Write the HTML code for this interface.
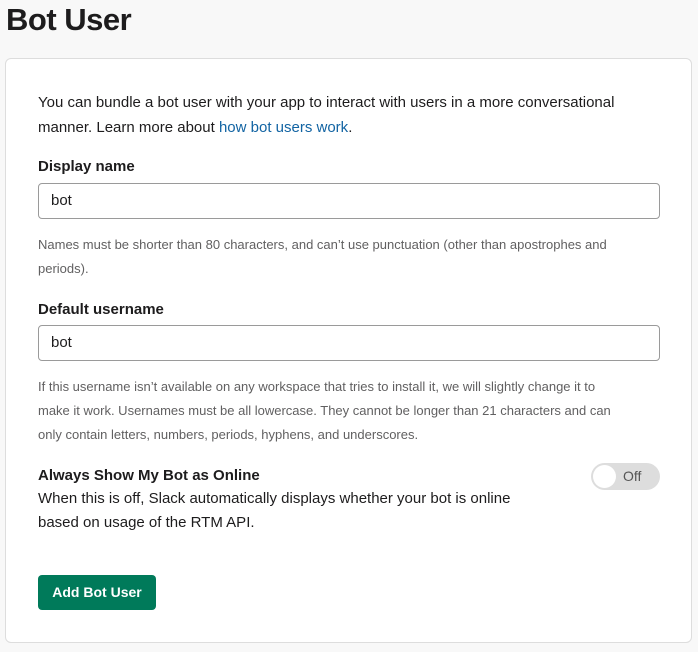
<!DOCTYPE html>
<html><head><style>
body{margin:0;width:698px;height:652px;background:#f8f8f8;font-family:"Liberation Sans",sans-serif;color:#1d1c1d;position:relative;overflow:hidden}
.a{position:absolute;white-space:nowrap}
h1{position:absolute;left:6px;top:2px;margin:0;font-size:31px;font-weight:bold;letter-spacing:-0.5px}
.card{position:absolute;left:5px;top:58px;width:687px;height:585px;background:#fff;border:1px solid #ddd;border-radius:6px;box-sizing:border-box}
.p{font-size:15px;line-height:25px}
.b{font-size:15px;font-weight:bold}
.in{position:absolute;left:38px;width:622px;height:36px;border:1px solid #9a9a9a;border-radius:4px;box-sizing:border-box;font-size:15px;padding:8px 12px}
.h{font-size:13px;color:#616061;line-height:24px}
a{color:#1264a3;text-decoration:none}
.tg{position:absolute;left:591px;top:463px;width:69px;height:27px;background:#ddd;border-radius:14px}
.tg .k{position:absolute;left:2px;top:2px;width:23px;height:23px;background:#fff;border-radius:50%}
.tg span{position:absolute;left:32px;top:5px;font-size:14px;color:#555}
.btn{position:absolute;left:38px;top:575px;width:118px;height:35px;background:#007a5a;border-radius:4px;color:#fff;font-size:14px;font-weight:bold;text-align:center;line-height:35px}
</style></head><body>
<h1>Bot User</h1>
<div class="card"></div>
<div class="a p" style="left:38px;top:90px">You can bundle a bot user with your app to interact with users in a more conversational<br>manner. Learn more about <a>how bot users work</a>.</div>
<div class="a b" style="left:38px;top:158px">Display name</div>
<div class="in" style="top:183px">bot</div>
<div class="a h" style="left:38px;top:233px">Names must be shorter than 80 characters, and can’t use punctuation (other than apostrophes and<br>periods).</div>
<div class="a b" style="left:38px;top:301px">Default username</div>
<div class="in" style="top:325px">bot</div>
<div class="a h" style="left:38px;top:375px">If this username isn’t available on any workspace that tries to install it, we will slightly change it to<br>make it work. Usernames must be all lowercase. They cannot be longer than 21 characters and can<br>only contain letters, numbers, periods, hyphens, and underscores.</div>
<div class="a b" style="left:38px;top:467px">Always Show My Bot as Online</div>
<div class="a p" style="left:38px;top:487px;line-height:24px">When this is off, Slack automatically displays whether your bot is online<br>based on usage of the RTM API.</div>
<div class="tg"><div class="k"></div><span>Off</span></div>
<div class="btn">Add Bot User</div>
</body></html>
